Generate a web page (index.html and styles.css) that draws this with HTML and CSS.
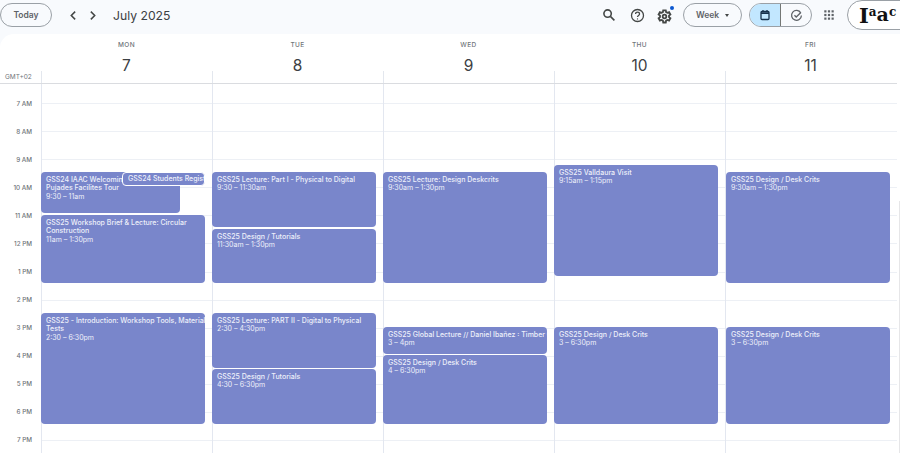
FILE: index.html
```html
<!DOCTYPE html>
<html lang="en">
<head>
<meta charset="utf-8">
<title>July 2025</title>
<link rel="stylesheet" href="styles.css">
</head>
<body>
<header class="topbar">
  <div class="topbar-left">
    <button class="pill today">Today</button>
    <div class="nav-arrows">
      <svg class="chev" viewBox="0 0 10 10"><path d="M6.5 1.5 3 5l3.5 3.5"/></svg>
      <svg class="chev" viewBox="0 0 10 10"><path d="M3.5 1.5 7 5 3.5 8.5"/></svg>
    </div>
    <div class="month">July 2025</div>
  </div>
  <div class="topbar-right">
    <svg class="icon search" viewBox="0 0 14 14"><circle cx="5.6" cy="5.6" r="3.7"/><path d="m8.4 8.4 4 4"/></svg>
    <svg class="icon help" viewBox="0 0 14 14"><circle cx="7" cy="7" r="5.6"/><path d="M5.2 5.6c0-2.3 3.7-2.3 3.7 0 0 1.3-1.9 1.4-1.9 2.9"/><circle class="dot" cx="7" cy="10.2" r=".6"/></svg>
    <div class="gear-wrap">
      <svg class="icon gear" viewBox="0 0 14 14"><path d="M5.8 1.2h2.4l.3 1.7 1.2.7 1.6-.6 1.2 2.1-1.3 1.1v1.4l1.3 1.1-1.2 2.1-1.6-.6-1.2.7-.3 1.7H5.8l-.3-1.7-1.2-.7-1.6.6-1.2-2.1 1.3-1.1V6.2L1.5 5.1l1.2-2.1 1.6.6 1.2-.7z"/><circle cx="7" cy="7" r="1.7"/></svg>
      <span class="gear-dot"></span>
    </div>
    <button class="pill week">Week<span class="caret"></span></button>
    <div class="toggle">
      <div class="toggle-cell on">
        <svg class="icon cal" viewBox="0 0 12 12"><rect x="2" y="2.5" width="8" height="8" rx="1"/><path class="cal-band" d="M2 4.2h8"/><path d="M4 1v2M8 1v2"/></svg>
      </div>
      <div class="toggle-cell">
        <svg class="icon task" viewBox="0 0 14 14"><path d="M11.6 4.2A5.3 5.3 0 1 0 12.3 7"/><path d="m4.8 6.8 1.9 1.9 5-5"/></svg>
      </div>
    </div>
    <svg class="apps" viewBox="0 0 11 11"><rect x=".3" y=".3" width="2.4" height="2.4"/><rect x="4.3" y=".3" width="2.4" height="2.4"/><rect x="8.3" y=".3" width="2.4" height="2.4"/><rect x=".3" y="4.3" width="2.4" height="2.4"/><rect x="4.3" y="4.3" width="2.4" height="2.4"/><rect x="8.3" y="4.3" width="2.4" height="2.4"/><rect x=".3" y="8.3" width="2.4" height="2.4"/><rect x="4.3" y="8.3" width="2.4" height="2.4"/><rect x="8.3" y="8.3" width="2.4" height="2.4"/></svg>
    <div class="account"><span class="logo-cap">I</span><span class="logo-sm">a</span><span class="logo-big">a</span><span class="logo-sm">c</span></div>
  </div>
</header>

<main class="panel">
  <div class="day-head">
    <div class="tz">GMT+02</div>
    <div class="day"><div class="dow">MON</div><div class="num">7</div></div>
    <div class="day"><div class="dow">TUE</div><div class="num">8</div></div>
    <div class="day"><div class="dow">WED</div><div class="num">9</div></div>
    <div class="day"><div class="dow">THU</div><div class="num">10</div></div>
    <div class="day"><div class="dow">FRI</div><div class="num">11</div></div>
  </div>
  <div class="body">
    <div class="hours">
      <div class="hour">7 AM</div>
      <div class="hour">8 AM</div>
      <div class="hour">9 AM</div>
      <div class="hour">10 AM</div>
      <div class="hour">11 AM</div>
      <div class="hour">12 PM</div>
      <div class="hour">1 PM</div>
      <div class="hour">2 PM</div>
      <div class="hour">3 PM</div>
      <div class="hour">4 PM</div>
      <div class="hour">5 PM</div>
      <div class="hour">6 PM</div>
      <div class="hour">7 PM</div>
    </div>
    <div class="col">
      <div class="ev e-welcome"><div class="t">GSS24 IAAC Welcoming<br>Pujades Facilites Tour</div><div>9:30 – 11am</div></div>
      <div class="ev e-students"><div class="t nowrap">GSS24 Students Regist</div></div>
      <div class="ev e-brief"><div class="t">GSS25 Workshop Brief &amp; Lecture: Circular Construction</div><div>11am – 1:30pm</div></div>
      <div class="ev e-intro"><div class="t nowrap">GSS25 - Introduction: Workshop Tools, Material</div><div class="t">Tests</div><div>2:30 – 6:30pm</div></div>
    </div>
    <div class="col">
      <div class="ev e-t1"><div class="t">GSS25 Lecture: Part I - Physical to Digital</div><div>9:30 – 11:30am</div></div>
      <div class="ev e-t2"><div class="t">GSS25 Design / Tutorials</div><div>11:30am – 1:30pm</div></div>
      <div class="ev e-t3"><div class="t">GSS25 Lecture: PART II - Digital to Physical</div><div>2:30 – 4:30pm</div></div>
      <div class="ev e-t4"><div class="t">GSS25 Design / Tutorials</div><div>4:30 – 6:30pm</div></div>
    </div>
    <div class="col">
      <div class="ev e-w1"><div class="t">GSS25 Lecture: Design Deskcrits</div><div>9:30am – 1:30pm</div></div>
      <div class="ev e-w2"><div class="t nowrap">GSS25 Global Lecture // Daniel Ibañez : Timber C</div><div>3 – 4pm</div></div>
      <div class="ev e-w3"><div class="t">GSS25 Design / Desk Crits</div><div>4 – 6:30pm</div></div>
    </div>
    <div class="col">
      <div class="ev e-h1"><div class="t">GSS25 Valldaura Visit</div><div>9:15am – 1:15pm</div></div>
      <div class="ev e-h2"><div class="t">GSS25 Design / Desk Crits</div><div>3 – 6:30pm</div></div>
    </div>
    <div class="col">
      <div class="ev e-w1"><div class="t">GSS25 Design / Desk Crits</div><div>9:30am – 1:30pm</div></div>
      <div class="ev e-h2"><div class="t">GSS25 Design / Desk Crits</div><div>3 – 6:30pm</div></div>
    </div>
  </div>
</main>
</body>
</html>
```
FILE: styles.css
```css
* { box-sizing: border-box; }
html, body { margin: 0; height: 100%; }
body {
  width: 900px;
  height: 453px;
  overflow: hidden;
  background: #f8fafd;
  font-family: Inter, Roboto, "Liberation Sans", sans-serif;
  color: #3c4043;
  display: flex;
  flex-direction: column;
}
.topbar {
  height: 34px;
  flex: none;
  display: flex;
  justify-content: space-between;
  align-items: center;
  padding-bottom: 4px;
}
.topbar-left, .topbar-right { display: flex; align-items: center; }
.pill {
  height: 24px;
  border: 1px solid #9aa0a6;
  border-radius: 12px;
  background: transparent;
  font: 600 8.5px Inter, Roboto, sans-serif;
  color: #5f6368;
  padding: 0;
}
.today { width: 52px; }
.nav-arrows { display: flex; gap: 8px; margin-left: 16px; }
.chev { width: 11px; height: 11px; fill: none; stroke: #444746; stroke-width: 1.4; }
.month { font-size: 12.2px; color: #3c4043; margin-left: 15px; }
.icon { fill: none; stroke: #444746; stroke-width: 1.2; }
.search { width: 14px; height: 14px; stroke-width: 1.6; }
.help { width: 15px; height: 15px; margin-left: 14px; }
.help .dot { fill: #444746; stroke: none; }
.gear-wrap { position: relative; width: 15px; height: 15px; margin-left: 12px; }
.gear { width: 15px; height: 15px; stroke-width: 1.7; }
.gear-dot { position: absolute; right: -2px; top: -2px; width: 4px; height: 4px; border-radius: 50%; background: #0b57d0; }
.week { width: 59px; margin-left: 11px; display: flex; align-items: center; justify-content: center; gap: 6px; }
.caret { border: 2.5px solid transparent; border-top: 3px solid #444746; border-bottom: 0; }
.toggle { display: flex; margin-left: 7px; height: 24px; width: 63px; border: 1px solid #9aa0a6; border-radius: 12px; overflow: hidden; }
.toggle-cell { flex: 1; display: flex; align-items: center; justify-content: center; }
.toggle-cell.on { background: #c2e7ff; border-right: 1px solid #747775; }
.cal { width: 12px; height: 12px; stroke: #17324d; stroke-width: 1.3; }
.cal-band { stroke-width: 1.8; }
.task { width: 13px; height: 13px; stroke: #5f6368; stroke-width: 1.4; }
.apps { width: 10px; height: 10px; margin-left: 12px; fill: #5f6368; }
.account {
  width: 70px;
  height: 30px;
  margin-left: 13px;
  margin-right: -17px;
  background: #fff;
  border: 1px solid #9aa0a6;
  border-radius: 15px;
  display: flex;
  align-items: center;
  padding-left: 11px;
  font-family: "DejaVu Serif", "Liberation Serif", serif;
  font-weight: 700;
  color: #111;
  overflow: hidden;
  line-height: 1;
}
.logo-cap { font-size: 21px; }
.logo-big { font-size: 19px; margin-bottom: 1px; }
.logo-sm { font-size: 12px; margin-bottom: 7px; }

.panel {
  flex: 1;
  background: #fff;
  border-radius: 14px 0 0 0;
  display: flex;
  flex-direction: column;
  overflow: hidden;
  position: relative;
}
.panel::after {
  content: "";
  position: absolute;
  right: 0;
  top: 167px;
  bottom: 0;
  width: 1px;
  background: #e6e6e8;
}
.day-head {
  height: 50px;
  flex: none;
  width: 897px;
  display: grid;
  grid-template-columns: 41px repeat(5, 171px);
  border-bottom: 1px solid #dadce0;
}
.tz { align-self: end; font-size: 6.5px; color: #70757a; padding: 0 0 2.5px 5px; }
.day {
  text-align: center;
  position: relative;
  color: #3c4043;
  padding-top: 7px;
}
.day::before {
  content: "";
  position: absolute;
  left: 0;
  bottom: 0;
  height: 12px;
  width: 1px;
  background: #e3e7ee;
}
.dow { font-size: 6.5px; font-weight: 500; letter-spacing: .4px; color: #70757a; line-height: 9px; }
.num { font-size: 15.5px; line-height: 20px; margin-top: 6px; color: #3c4043; }

.body {
  flex: 1;
  width: 897px;
  display: grid;
  grid-template-columns: 41px repeat(5, 171px);
  background: repeating-linear-gradient(to bottom, transparent 0, transparent 27.08px, #edf0f5 27.08px, #edf0f5 28.08px);
  background-position: 0 -8px;
}
.hours { display: flex; flex-direction: column; padding-top: 15.5px; background: #fff; }
.hour { height: 28.08px; font-size: 6.3px; font-weight: 500; line-height: 9px; text-align: right; padding-right: 9px; color: #70757a; }
.col { position: relative; border-left: 1px solid #e3e7f0; }

.ev {
  position: absolute;
  left: -1px;
  width: 163.5px;
  background: #7986cb;
  color: #eef0fa;
  border-radius: 4px;
  font-size: 7px;
  font-weight: 400;
  line-height: 8.7px;
  padding: 3.5px 0 0 5px;
  overflow: hidden;
}
.col:last-child .ev { left: 0; }
.t { font-weight: 500; }
.nowrap { white-space: nowrap; overflow: hidden; }
.e-welcome { top: 88px; height: 41px; width: 139px; }
.e-students { top: 88px; height: 14px; left: 80px; width: 83px; border: 1px solid #fff; z-index: 1; padding-top: 2px; }
.e-brief { top: 131px; height: 68px; }
.e-intro { top: 229px; height: 111px; }
.e-t1 { top: 88px; height: 55px; }
.e-t2 { top: 145px; height: 54px; }
.e-t3 { top: 229px; height: 55px; }
.e-t4 { top: 285px; height: 55px; }
.e-w1 { top: 88px; height: 111px; }
.e-w2 { top: 243px; height: 27px; }
.e-w3 { top: 271px; height: 69px; }
.e-h1 { top: 81px; height: 111px; }
.e-h2 { top: 243px; height: 97px; }
```
